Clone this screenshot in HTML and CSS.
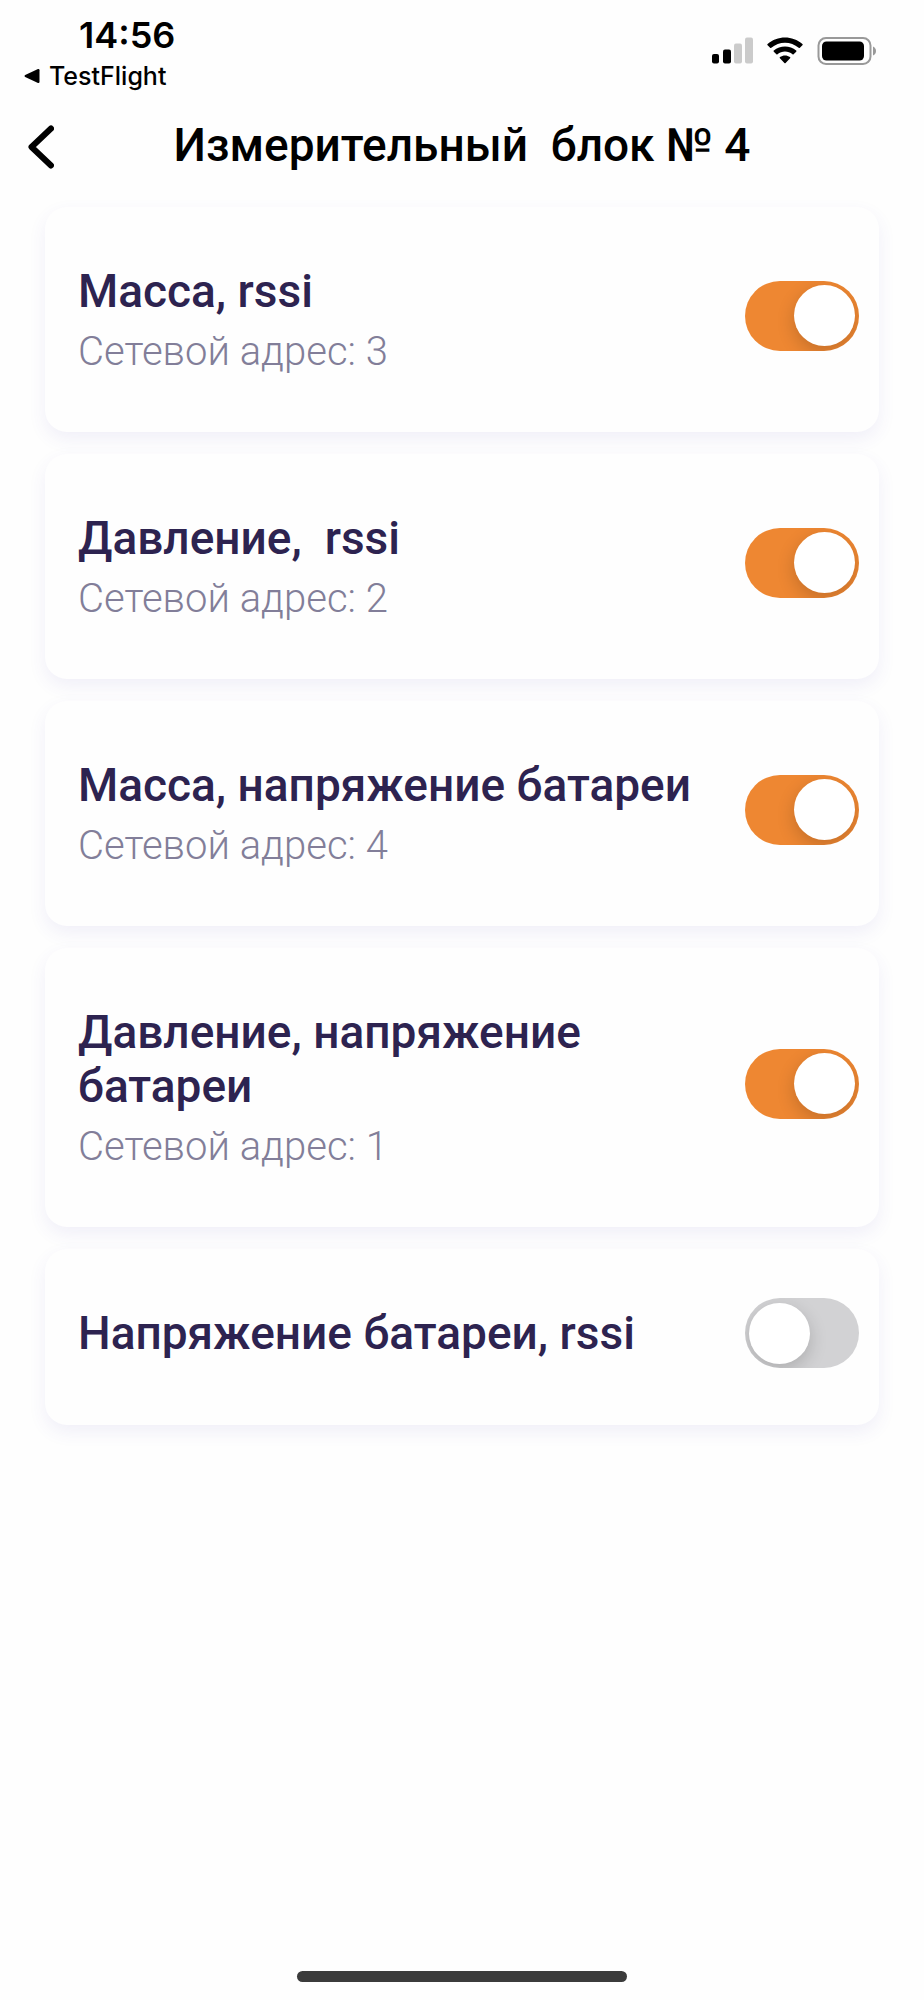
FILE: index.html
```
<!DOCTYPE html>
<html lang="ru">
<head>
<meta charset="utf-8">
<meta name="viewport" content="width=device-width, initial-scale=1">
<title>Измерительный блок № 4</title>
<link rel="stylesheet" href="styles.css">
</head>
<body>
<div class="screen">
  <div class="status">
    <div class="status-left">
      <time class="clock">14:56</time>
      <a class="return-link" href="#">
        <svg class="return-icon" viewBox="0 0 16 16" aria-hidden="true"><path d="M1.2 7 14 1.1q1.500-.4 1.500 1.100v11.600q0 1.500-1.500 1.100L1.200 9q-1.400-1 0-2z"/></svg>
        <span>TestFlight</span>
      </a>
    </div>
    <div class="status-icons">
      <svg class="signal" viewBox="0 0 41 27" aria-hidden="true">
        <rect x="0" y="17" width="7" height="9.500" rx="2"/>
        <rect x="11" y="12.500" width="8" height="14" rx="2"/>
        <rect class="dim" x="22" y="6.500" width="8" height="20" rx="2"/>
        <rect class="dim" x="33" y="0.500" width="8" height="26" rx="2"/>
      </svg>
      <svg class="wifi" viewBox="0 0 36 27" aria-hidden="true">
        <path d="M.6 7.100C10.300-1.700 25.700-1.700 35.400 7.100q.6.600 0 1.200l-2.500 2.500q-.6.500-1.200 0c-7.700-6.900-19.700-6.900-27.400 0q-.6.500-1.200 0L.6 8.300q-.6-.6 0-1.200z"/>
        <path d="M6.800 13.600c6.300-5.600 16.100-5.600 22.400 0q.6.600 0 1.200l-2.600 2.500q-.5.500-1.100 0c-4.200-3.700-10.800-3.700-15 0q-.6.500-1.100 0l-2.600-2.500q-.6-.6 0-1.200z"/>
        <path d="M13 20.100c2.900-2.200 7.100-2.200 10 0q.7.600.1 1.200l-4.500 4.600q-.6.600-1.200 0l-4.500-4.600q-.6-.6.100-1.200z"/>
      </svg>
      <svg class="battery" viewBox="0 0 59 28" aria-hidden="true">
        <rect class="shell" x="1.500" y="1" width="52" height="26" rx="7.500"/>
        <rect x="5" y="4.500" width="42" height="19" rx="4.500"/>
        <path class="tip" d="M56 9.500q3 1.500 3 4.500t-3 4.500z"/>
      </svg>
    </div>
  </div>

  <header class="nav">
    <button class="back" type="button" aria-label="Назад">
      <svg class="back-icon" viewBox="0 0 26 44" aria-hidden="true"><path d="M23 3.500 3.500 22 23 40.500"/></svg>
    </button>
    <h1 class="nav-title">Измерительный&nbsp; блок № 4</h1>
  </header>

  <main class="list">
    <label class="card">
      <span class="info"><span class="name">Масса, rssi</span><span class="address">Сетевой адрес: 3</span></span>
      <input class="switch" type="checkbox" role="switch" checked>
    </label>
    <label class="card">
      <span class="info"><span class="name">Давление,&nbsp; rssi</span><span class="address">Сетевой адрес: 2</span></span>
      <input class="switch" type="checkbox" role="switch" checked>
    </label>
    <label class="card">
      <span class="info"><span class="name">Масса, напряжение батареи</span><span class="address">Сетевой адрес: 4</span></span>
      <input class="switch" type="checkbox" role="switch" checked>
    </label>
    <label class="card">
      <span class="info"><span class="name">Давление, напряжение батареи</span><span class="address">Сетевой адрес: 1</span></span>
      <input class="switch" type="checkbox" role="switch" checked>
    </label>
    <label class="card">
      <span class="name">Напряжение батареи, rssi</span>
      <input class="switch" type="checkbox" role="switch">
    </label>
  </main>

  <div class="home-indicator"></div>
</div>
</body>
</html>
```
FILE: styles.css
```
* {
  box-sizing: border-box;
}

body {
  margin: 0;
  background: #fefefe;
  color: #000;
  font-family: Roboto, "Noto Sans", sans-serif;
}

.screen {
  display: flex;
  flex-direction: column;
  min-height: 100vh;
}

.status {
  display: flex;
  justify-content: space-between;
  padding: 14px 48px 0 24px;
  font-family: Inter, "Liberation Sans", sans-serif;
}

.status-left {
  display: flex;
  flex-direction: column;
}

.clock {
  padding-left: 55px;
  font-size: 36px;
  font-weight: 600;
  line-height: 42px;
}

.return-link {
  display: flex;
  align-items: center;
  gap: 9px;
  color: inherit;
  font-size: 25px;
  font-weight: 500;
  line-height: 40px;
  text-decoration: none;
}

.return-icon {
  width: 16px;
  height: 16px;
}

.status-icons {
  display: flex;
  align-items: flex-start;
  gap: 14px;
  padding-top: 23px;
}

.signal {
  width: 41px;
  height: 27px;
}

.dim {
  fill: #cbcbcb;
}

.wifi {
  width: 36px;
  height: 27px;
}

.battery {
  width: 59px;
  height: 28px;
}

.shell {
  fill: none;
  stroke: #999;
  stroke-width: 2;
}

.tip {
  fill: #999;
}

.nav {
  display: grid;
  grid-template-columns: 82px 1fr 82px;
  align-items: center;
  height: 98px;
  margin-bottom: 13px;
}

.back {
  display: flex;
  padding: 4px 0 0 28px;
  border: 0;
  background: none;
}

.back-icon {
  width: 26px;
  height: 44px;
  fill: none;
  stroke: #000;
  stroke-width: 6;
  stroke-linecap: round;
  stroke-linejoin: round;
}

.nav-title {
  margin: 0;
  font-size: 46px;
  font-weight: 500;
  line-height: 54px;
  text-align: center;
}

.list {
  display: flex;
  flex-direction: column;
  gap: 22px;
  padding: 0 45px;
}

.card {
  display: flex;
  align-items: center;
  justify-content: space-between;
  gap: 40px;
  padding: 49px 20px 57px 33px;
  border-radius: 22px;
  background: #fefefe;
  box-shadow: 0 7px 18px rgba(80, 60, 180, 0.08);
}

.info {
  display: flex;
  flex-direction: column;
  gap: 11px;
  padding-top: 8px;
}

.name {
  color: #2d2350;
  font-size: 46px;
  font-weight: 500;
  line-height: 54px;
}

.address {
  color: #827e99;
  font-size: 40px;
  font-weight: 300;
  line-height: 46px;
}

.switch {
  flex: none;
  display: flex;
  align-items: center;
  width: 114px;
  height: 70px;
  margin: 0;
  padding: 0 4px;
  border-radius: 35px;
  background: #d2d2d4;
  appearance: none;
  overflow: hidden;
}

.switch::before {
  content: "";
  width: 61px;
  height: 61px;
  border-radius: 50%;
  background: #fff;
  box-shadow: 0 6px 18px rgba(0, 0, 0, 0.18);
}

.switch:checked {
  justify-content: flex-end;
  background: #ee8732;
}

.home-indicator {
  align-self: center;
  width: 330px;
  height: 11px;
  margin: auto 0 18px;
  border-radius: 6px;
  background: #3b3b3b;
}
```
